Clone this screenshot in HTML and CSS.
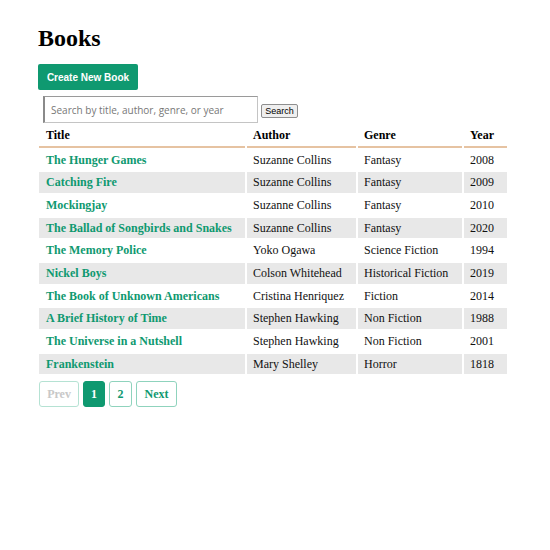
FILE: index.html
```html
<!DOCTYPE html>
<html>
<head>
<meta charset="utf-8">
<link rel="stylesheet" href="styles.css">
</head>
<body>
<div class="page">
  <h1 class="title">Books</h1>
  <a class="create-btn" href="#">Create New Book</a>
  <form class="search">
    <input class="search-input" type="text" placeholder="Search by title, author, genre, or year">
    <button class="search-btn" type="button">Search</button>
  </form>
  <table class="books">
    <thead>
      <tr><th class="c-title">Title</th><th class="c-author">Author</th><th class="c-genre">Genre</th><th class="c-year">Year</th></tr>
    </thead>
    <tbody>
      <tr><td><a href="#">The Hunger Games</a></td><td>Suzanne Collins</td><td>Fantasy</td><td>2008</td></tr>
      <tr><td><a href="#">Catching Fire</a></td><td>Suzanne Collins</td><td>Fantasy</td><td>2009</td></tr>
      <tr><td><a href="#">Mockingjay</a></td><td>Suzanne Collins</td><td>Fantasy</td><td>2010</td></tr>
      <tr><td><a href="#">The Ballad of Songbirds and Snakes</a></td><td>Suzanne Collins</td><td>Fantasy</td><td>2020</td></tr>
      <tr><td><a href="#">The Memory Police</a></td><td>Yoko Ogawa</td><td>Science Fiction</td><td>1994</td></tr>
      <tr><td><a href="#">Nickel Boys</a></td><td>Colson Whitehead</td><td>Historical Fiction</td><td>2019</td></tr>
      <tr><td><a href="#">The Book of Unknown Americans</a></td><td>Cristina Henriquez</td><td>Fiction</td><td>2014</td></tr>
      <tr><td><a href="#">A Brief History of Time</a></td><td>Stephen Hawking</td><td>Non Fiction</td><td>1988</td></tr>
      <tr><td><a href="#">The Universe in a Nutshell</a></td><td>Stephen Hawking</td><td>Non Fiction</td><td>2001</td></tr>
      <tr><td><a href="#">Frankenstein</a></td><td>Mary Shelley</td><td>Horror</td><td>1818</td></tr>
    </tbody>
  </table>
  <nav class="pager">
    <span class="page-btn disabled">Prev</span>
    <a class="page-btn active" href="#">1</a>
    <a class="page-btn" href="#">2</a>
    <a class="page-btn" href="#">Next</a>
  </nav>
</div>
</body>
</html>
```
FILE: styles.css
```css
html, body {
  margin: 0;
  padding: 0;
  background: #fff;
}
body {
  font-family: "Liberation Serif", "Times New Roman", serif;
  font-size: 12px;
  color: #111;
}
.page {
  padding: 24px 0 0 38px;
  display: flex;
  flex-direction: column;
  align-items: flex-start;
}
.title {
  margin: 0;
  font-size: 24px;
  line-height: 28px;
  font-weight: bold;
  color: #000;
}
.create-btn {
  margin-top: 12px;
  display: inline-flex;
  align-items: center;
  justify-content: center;
  width: 100px;
  height: 26px;
  box-sizing: border-box;
  background: #0f9970;
  color: #fff;
  border-radius: 2px;
  font-family: "Liberation Sans", Arial, sans-serif;
  font-weight: bold;
  font-size: 10px;
  text-decoration: none;
}
.search {
  margin: 6px 0 0 5px;
  display: flex;
  align-items: center;
  gap: 3px;
}
.search-input {
  width: 215px;
  height: 27px;
  box-sizing: border-box;
  border: 1px solid #c4c4c4;
  border-left: 2px solid #8a8a8a;
  border-top: 1px solid #9a9a9a;
  padding: 0 6px;
  font-family: "Open Sans", "Liberation Sans", sans-serif;
  font-size: 10px;
  color: #333;
  outline: none;
}
.search-input::placeholder {
  color: #777;
}
.search-btn {
  height: 14px;
  width: 37px;
  padding: 0;
  box-sizing: border-box;
  border: 1px solid #8e8e8e;
  border-radius: 2px;
  background: #efefef;
  font-family: "Liberation Sans", Arial, sans-serif;
  font-size: 9px;
  line-height: 12px;
  color: #000;
  margin-top: 2px;
}
.books {
  margin: 0 0 0 -1px;
  border-collapse: separate;
  border-spacing: 2px;
  width: 472px;
}
.books th,
.books td {
  text-align: left;
  padding: 2px 7px 2px 7px;
  line-height: 16.67px;
  font-size: 12px;
  white-space: nowrap;
}
.books th {
  font-weight: bold;
  color: #000;
  border-bottom: 2px solid #e6c3a2;
}
.books td + td,
.books th + th {
  padding-left: 6px;
}
.c-title { width: 192px; }
.c-author { width: 96px; }
.c-genre { width: 91px; }
.c-year { width: 30px; }
.books tbody tr:nth-child(even) td {
  background: #e8e8e8;
}
.books td a {
  color: #0f9970;
  font-weight: bold;
  text-decoration: none;
}
.pager {
  margin: 5px 0 0 1px;
  display: flex;
  gap: 4px;
}
.page-btn {
  display: inline-flex;
  align-items: center;
  justify-content: center;
  height: 26px;
  min-width: 23px;
  padding: 0 7.5px;
  box-sizing: border-box;
  border: 1px solid #8fd3bd;
  border-radius: 3px;
  color: #0f9970;
  font-weight: bold;
  font-size: 12px;
  text-decoration: none;
}
.page-btn.disabled {
  color: #c8c8c8;
  width: 40px;
  border-color: #b5e2d3;
}
.page-btn.active {
  background: #0f9970;
  border-color: #0f9970;
  color: #fff;
  width: 22px;
  min-width: 22px;
}
```
